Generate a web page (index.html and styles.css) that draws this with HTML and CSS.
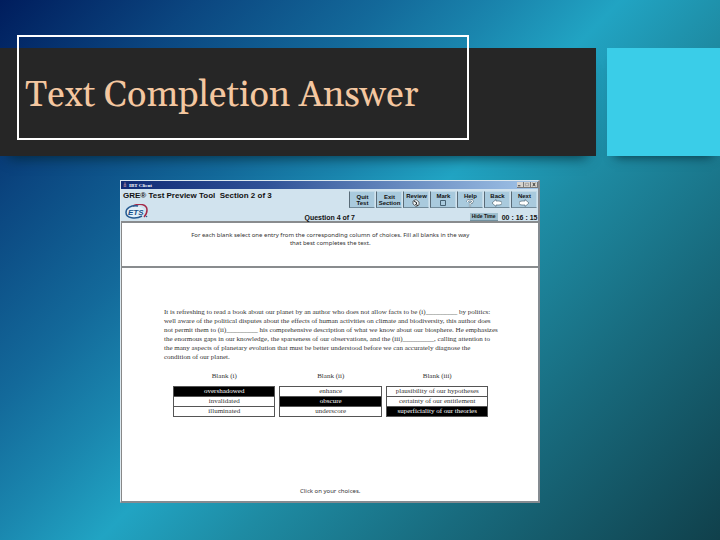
FILE: index.html
```
<!DOCTYPE html>
<html lang="en">
<head>
<meta charset="utf-8">
<title>Text Completion Answer</title>
<link rel="stylesheet" href="styles.css">
</head>
<body>
<main class="slide">
  <header class="banner">
    <div class="band"><h1 class="title">Text Completion Answer</h1></div>
    <div class="accent"></div>
  </header>
  <section class="window">
    <div class="titlebar">
      <svg class="app-icon" viewBox="0 0 6 8"><path d="M3 0v4M1 4h4M1 6h4" stroke="#e7a5a8" fill="none"/></svg>
      <span class="caption">IBT Client</span>
      <button class="win" aria-label="Minimize"><svg viewBox="0 0 7 6"><path d="M1 4.5h3" stroke="#222"/></svg></button>
      <button class="win" aria-label="Maximize"><svg viewBox="0 0 7 6"><path d="M1.5 1.5h4v3h-4z" stroke="#999" fill="none"/></svg></button>
      <button class="win" aria-label="Close"><svg viewBox="0 0 7 6"><path d="M2 1l3 4M5 1L2 5" stroke="#222"/></svg></button>
    </div>
    <div class="toolbar">
      <div class="brand">
        <h2 class="app-title">GRE® Test Preview Tool&nbsp; Section 2 of 3</h2>
        <svg class="logo" viewBox="0 0 24 16" role="img" aria-label="ETS">
          <path d="M8 2C14-1 22 0 22 6c0 3-1 5-3 7" fill="none" stroke="#a52a48" stroke-width="1.5"/>
          <ellipse cx="10.5" cy="8" rx="9" ry="5.5" fill="#e2eff8" transform="rotate(-8 10.5 8)"/>
          <path d="M13 2C6 1 1 4 1 8.500c0 6 10 7 16 3.500" fill="none" stroke="#255a91" stroke-width="1.5"/>
          <text x="3" y="11" class="logo-text">ETS</text>
          <circle cx="21.5" cy="12.5" r=".8" fill="#255a91"/>
        </svg>
      </div>
      <nav class="tools">
        <button class="tool">Quit<br>Test</button>
        <button class="tool">Exit<br>Section</button>
        <button class="tool">Review<svg viewBox="0 0 10 8"><path d="M2 2l3-1.500 3 2.500v3l-3 1.500-3-2.500z" fill="#eef5f8" stroke="#333" stroke-width=".7"/><path d="M3 2l3 2-1.500 1.500L7 6.500" fill="none" stroke="#222"/></svg></button>
        <button class="tool">Mark<svg viewBox="0 0 10 8"><path d="M2.500 1.500h5v5h-5z" fill="none" stroke="#466273"/></svg></button>
        <button class="tool">Help<svg viewBox="0 0 10 8"><path d="M2.500 3q0-2 2.500-2t2.500 1.500Q7.500 3.500 5 4.500v1M5 6.500v1" fill="none" stroke="#506572" stroke-width="2.200"/><path d="M2.500 3q0-2 2.500-2t2.500 1.500Q7.500 3.500 5 4.500v1M5 6.500v1" fill="none" stroke="#fff" stroke-width="1.200"/></svg></button>
        <button class="tool">Back<svg viewBox="0 0 10 8"><path d="M0 4L4 .5V2h3q3 0 3 2T7 6H4v1.500z" fill="#fff" stroke="#526b78" stroke-width=".7"/></svg></button>
        <button class="tool">Next<svg viewBox="0 0 10 8"><path d="M10 4L6 .5V2H3Q0 2 0 4t3 2h3v1.500z" fill="#fff" stroke="#526b78" stroke-width=".7"/></svg></button>
      </nav>
      <span class="question">Question 4 of 7</span>
      <div class="timer"><button class="hide">Hide Time</button><time>00 : 16 : 15</time></div>
    </div>
    <p class="directions">For each blank select one entry from the corresponding column of choices. Fill all blanks in the way<br>that best completes the text.</p>
    <div class="content">
      <p class="passage">It is refreshing to read a book about our planet by an author who does not allow facts to be (i)_________ by politics:<br>well aware of the political disputes about the effects of human activities on climate and biodiversity, this author does<br>not permit them to (ii)_________ his comprehensive description of what we know about our biosphere. He emphasizes<br>the enormous gaps in our knowledge, the sparseness of our observations, and the (iii)_________, calling attention to<br>the many aspects of planetary evolution that must be better understood before we can accurately diagnose the<br>condition of our planet.</p>
      <div class="blanks">
        <div class="blank"><h3>Blank (i)</h3><div class="options"><button class="on">overshadowed</button><button>invalidated</button><button>illuminated</button></div></div>
        <div class="blank"><h3>Blank (ii)</h3><div class="options"><button>enhance</button><button class="on">obscure</button><button>underscore</button></div></div>
        <div class="blank"><h3>Blank (iii)</h3><div class="options"><button>plausibility of our hypotheses</button><button>certainty of our entitlement</button><button class="on">superficiality of our theories</button></div></div>
      </div>
      <p class="hint">Click on your choices.</p>
    </div>
  </section>
</main>
</body>
</html>
```
FILE: styles.css
```
* { box-sizing: border-box; }
body { margin: 0; }
h1, h2, h3, p { margin: 0; font-weight: normal; }
button { margin: 0; padding: 0; border: 0; background: none; color: inherit; font: inherit; }
svg { display: block; }

.slide {
  min-height: 100vh;
  padding-top: 48px;
  overflow: hidden;
  background: linear-gradient(134deg, #001d5d 0%, #0b4680 16%, #13699a 31%, #1a86ae 41%, #21a4c3 50%, #1e8ba3 61%, #186b7e 77%, #10404b 100%);
}
.banner { display: grid; grid-template-columns: 596fr 113fr; gap: 11px; height: 108px; }
.band { padding-left: 17px; background: #262626; box-shadow: 0 11px 12px -9px rgba(0, 35, 45, .75); }
.accent { background: #3acde8; box-shadow: 0 9px 10px -8px rgba(0, 35, 45, .75); }
.title {
  display: flex;
  align-items: center;
  position: relative;
  top: -13px;
  width: 78%;
  height: 105px;
  padding: 16px 6px 0;
  border: 2px solid #fff;
  color: #f4c7a0;
  font: 36px Georgia, Gelasio, "Liberation Serif", serif;
  white-space: nowrap;
}
.window {
  width: 58.4%;
  margin: 24px auto 0 120px;
  border: 1px solid #dce8ef;
  border-right: 2px solid #858b91;
  border-bottom: 2px solid #858b91;
  background: #fff;
  color: #333;
}
.titlebar {
  display: flex;
  align-items: center;
  height: 8px;
  padding-left: 2px;
  background: linear-gradient(90deg, #102b75, #2f5297 35%, #a1c4e8);
  color: #fff;
  font: bold 5px "Liberation Serif", serif;
}
.app-icon { width: 4px; height: 6px; margin-right: 2px; }
.caption { flex: 1; }
.win { width: 7px; height: 6px; background: #d6d3ce; border-right: 1px solid #777; border-bottom: 1px solid #777; }
.win svg { width: 6px; height: 5px; }
.toolbar {
  display: grid;
  grid-template-columns: 1fr auto;
  position: relative;
  height: 34px;
  padding: 2px 1px 0 2px;
  background: #d1e3ee;
  border-bottom: 2px solid #898c8e;
  color: #111;
  font: bold 7px "Liberation Sans", sans-serif;
}
.app-title { font: bold 8px/10px "Liberation Sans", sans-serif; white-space: nowrap; }
.logo { width: 24px; height: 16px; margin: 3px 0 0 2px; }
.logo-text { font: italic bold 8px "Liberation Sans", sans-serif; fill: #174f88; }
.tools { display: flex; gap: 1px; }
.tool {
  width: 26px;
  height: 17px;
  background: #a9cadd;
  border: 1px solid #c2dae7;
  border-left-color: #596b77;
  border-bottom-color: #718a99;
  color: #111;
  font: bold 6px/6px "Liberation Sans", sans-serif;
}
.tool svg { width: 10px; height: 8px; margin: 0 auto; }
.question { position: absolute; left: 0; right: 0; bottom: 0; text-align: center; }
.timer { display: flex; align-items: center; justify-content: flex-end; gap: 4px; position: absolute; right: 1px; bottom: 0; }
.hide { width: 28px; height: 8px; background: #9fbfce; border-bottom: 1px solid #71909f; font-size: 5px; line-height: 7px; }
.directions {
  height: 45px;
  padding-top: 8px;
  border-left: 1px solid #888;
  border-bottom: 2px solid #898c8e;
  text-align: center;
  font: 6px/8px "Noto Sans", "DejaVu Sans", sans-serif;
}
.content { border-left: 1px solid #888; padding: 40px 0 6px; }
.passage { padding-left: 42px; font: 7px/9px "Liberation Serif", serif; white-space: nowrap; }
.blanks { display: grid; grid-template-columns: repeat(3, 1fr); gap: 4px; margin: 10px 50px 0 51px; text-align: center; font: 7px/9px "Liberation Serif", serif; }
.blank h3 { font: inherit; }
.options { display: grid; gap: 1px; margin-top: 5px; padding: 1px; background: #555; }
.options button { height: 9px; background: #fff; }
.options .on { background: #000; color: #fff; }
.hint { margin-top: 70px; text-align: center; font: 6px/8px "Noto Sans", "DejaVu Sans", sans-serif; }
```
